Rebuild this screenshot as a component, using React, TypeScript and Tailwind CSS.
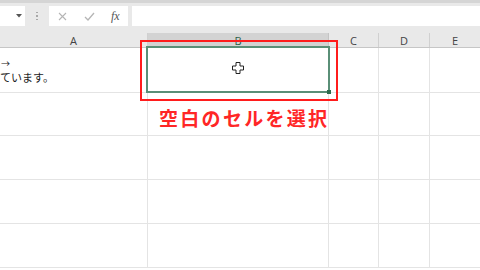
import React from "react";

const rowHeights = [45, 43, 44, 44, 44];

export default function App() {
  return (
    <div
      className="relative w-[480px] h-[270px] overflow-hidden bg-white"
      style={{ fontFamily: '"Open Sans", "Noto Sans CJK JP", sans-serif' }}
    >
      {/* toolbar */}
      <div className="h-[33px] bg-[#e9e9e9] border-t-[3px] border-[#d5d5d5] flex items-start pt-[3px]">
        <div className="w-[25px] h-[20px] bg-white flex items-center justify-end pr-[3px]">
          <svg width="6" height="4" viewBox="0 0 6 4">
            <path d="M0 0 L6 0 L3 3.5 Z" fill="#555" />
          </svg>
        </div>
        <div className="w-[24px] h-[20px] flex flex-col items-center justify-center gap-[2px]">
          <div className="w-[1.5px] h-[1.5px] bg-[#a8a8a8]" />
          <div className="w-[1.5px] h-[1.5px] bg-[#a8a8a8]" />
          <div className="w-[1.5px] h-[1.5px] bg-[#a8a8a8]" />
        </div>
        <div className="w-[79px] h-[20px] bg-white flex items-center">
          <svg className="ml-[9px]" width="9" height="9" viewBox="0 0 9 9">
            <path d="M1 1 L8 8 M8 1 L1 8" stroke="#b5b5b5" strokeWidth="1.1" />
          </svg>
          <svg className="ml-[17px]" width="11" height="9" viewBox="0 0 11 9">
            <path d="M1 5 L4 8 L10 1" stroke="#b5b5b5" strokeWidth="1.3" fill="none" />
          </svg>
          <span
            className="ml-[16px] text-[12px] leading-none italic text-[#555]"
            style={{ fontFamily: '"Liberation Serif", serif' }}
          >
            fx
          </span>
        </div>
        <div className="ml-[4px] flex-1 h-[20px] bg-white" />
      </div>

      {/* column headers */}
      <div className="h-[15px] bg-[#e9e9e9] flex border-b border-[#c6c6c6] text-[11px] leading-none text-[#444]">
        <div className="w-[148px] border-r border-[#d0d0d0] flex items-center justify-center">A</div>
        <div className="w-[181px] border-r border-[#c4c4c4] bg-[#d3d3d3] flex items-center justify-center text-[#2b5e45]">B</div>
        <div className="w-[50px] border-r border-[#d0d0d0] flex items-center justify-center">C</div>
        <div className="w-[51px] border-r border-[#d0d0d0] flex items-center justify-center">D</div>
        <div className="flex-1 flex items-center justify-center">E</div>
      </div>

      {/* grid */}
      <div className="flex flex-col">
        {rowHeights.map((h, i) => (
          <div key={i} className="flex border-b border-[#e4e4e4]" style={{ height: h }}>
            <div className="w-[148px] border-r border-[#e4e4e4] relative">
              {i === 0 && (
                <div className="pt-[11px] text-[11px] text-[#222]">
                  <div className="h-[10px] text-[9px] leading-[10px] pl-[1px]">→</div>
                  <div className="mt-[2px] leading-[14px]">ています。</div>
                </div>
              )}
            </div>
            <div className="w-[181px] border-r border-[#e4e4e4]" />
            <div className="w-[50px] border-r border-[#e4e4e4]" />
            <div className="w-[51px] border-r border-[#e4e4e4]" />
            <div className="flex-1" />
          </div>
        ))}
      </div>

      {/* selection */}
      <div className="absolute left-[146px] top-[46px] w-[184px] h-[47px] border-2 border-[#5a8f77]">
        <div className="absolute -right-[3px] -bottom-[3px] w-[4px] h-[4px] bg-[#2f6b4e]" />
      </div>

      {/* cursor */}
      <svg className="absolute left-[232px] top-[62px]" width="12" height="12" viewBox="0 0 12 12">
        <path
          d="M4 0.5 H8 V4 H11.5 V8 H8 V11.5 H4 V8 H0.5 V4 H4 Z"
          fill="white"
          stroke="#222"
          strokeWidth="1"
        />
      </svg>

      {/* red annotation box */}
      <div className="absolute left-[140px] top-[40px] w-[198px] h-[61px] border-[2.5px] border-[#ff1c1c]" />

      {/* annotation label */}
      <div
        className="absolute left-[159px] top-[105px] text-[19px] leading-[26px] font-bold text-[#ff2626] tracking-[2.3px]"
        style={{ fontFamily: '"Noto Sans CJK JP", sans-serif' }}
      >
        空白のセルを選択
      </div>
    </div>
  );
}
